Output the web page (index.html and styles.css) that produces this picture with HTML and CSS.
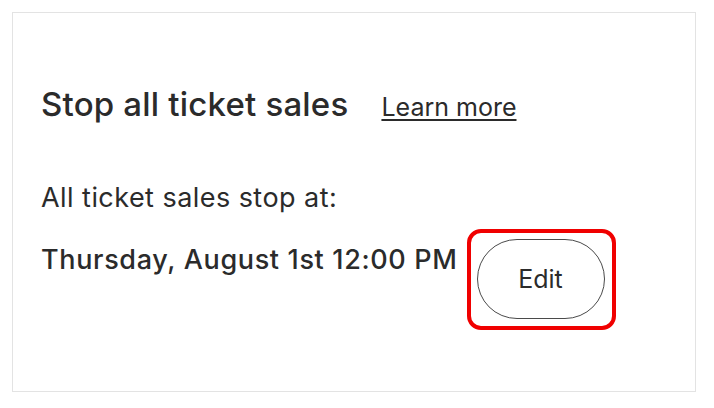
FILE: index.html
```html
<!DOCTYPE html>
<html>
<head>
<meta charset="utf-8">
<link rel="stylesheet" href="styles.css">
</head>
<body>
<div class="card">
  <div class="title-row">
    <h2 class="title">Stop all ticket sales</h2>
    <a class="learn" href="#">Learn more</a>
  </div>
  <p class="label">All ticket sales stop at:</p>
  <div class="date-row">
    <span class="date">Thursday, August 1st 12:00 PM</span>
    <span class="highlight"><button class="edit">Edit</button></span>
  </div>
</div>
</body>
</html>
```
FILE: styles.css
```css
html, body {
  margin: 0;
  padding: 0;
  background: #ffffff;
}
body {
  font-family: Inter, "Liberation Sans", Arial, sans-serif;
  color: #2b2b2b;
}
.card {
  box-sizing: border-box;
  margin: 12px 0 0 12px;
  width: 684px;
  height: 380px;
  border: 1px solid #e3e3e3;
  padding: 71px 0 0 28px;
}
.title-row {
  display: flex;
  align-items: baseline;
  gap: 33px;
}
.title {
  margin: 0;
  font-size: 33px;
  line-height: 40px;
  font-weight: 500;
  letter-spacing: 0.2px;
}
.learn {
  font-size: 25px;
  color: #2b2b2b;
  text-decoration: underline;
  text-underline-offset: 3px;
  text-decoration-thickness: 2px;
}
.label {
  margin: 58px 0 0 0;
  font-size: 27px;
  line-height: 32px;
  letter-spacing: 0.45px;
}
.date-row {
  display: flex;
  align-items: flex-start;
  gap: 9px;
  margin-top: 15px;
}
.date {
  margin-top: 15px;
  font-size: 27px;
  line-height: 32px;
  font-weight: 500;
  letter-spacing: 0.65px;
}
.highlight {
  display: inline-flex;
  border: 4px solid #f00000;
  border-radius: 14px;
  padding: 6px 7px 7px 6px;
}
.edit {
  box-sizing: border-box;
  width: 128px;
  height: 80px;
  border: 1px solid #4a4a4a;
  border-radius: 40px;
  background: #ffffff;
  font-family: Inter, "Liberation Sans", Arial, sans-serif;
  font-size: 25px;
  color: #2b2b2b;
  padding: 0;
}
```
